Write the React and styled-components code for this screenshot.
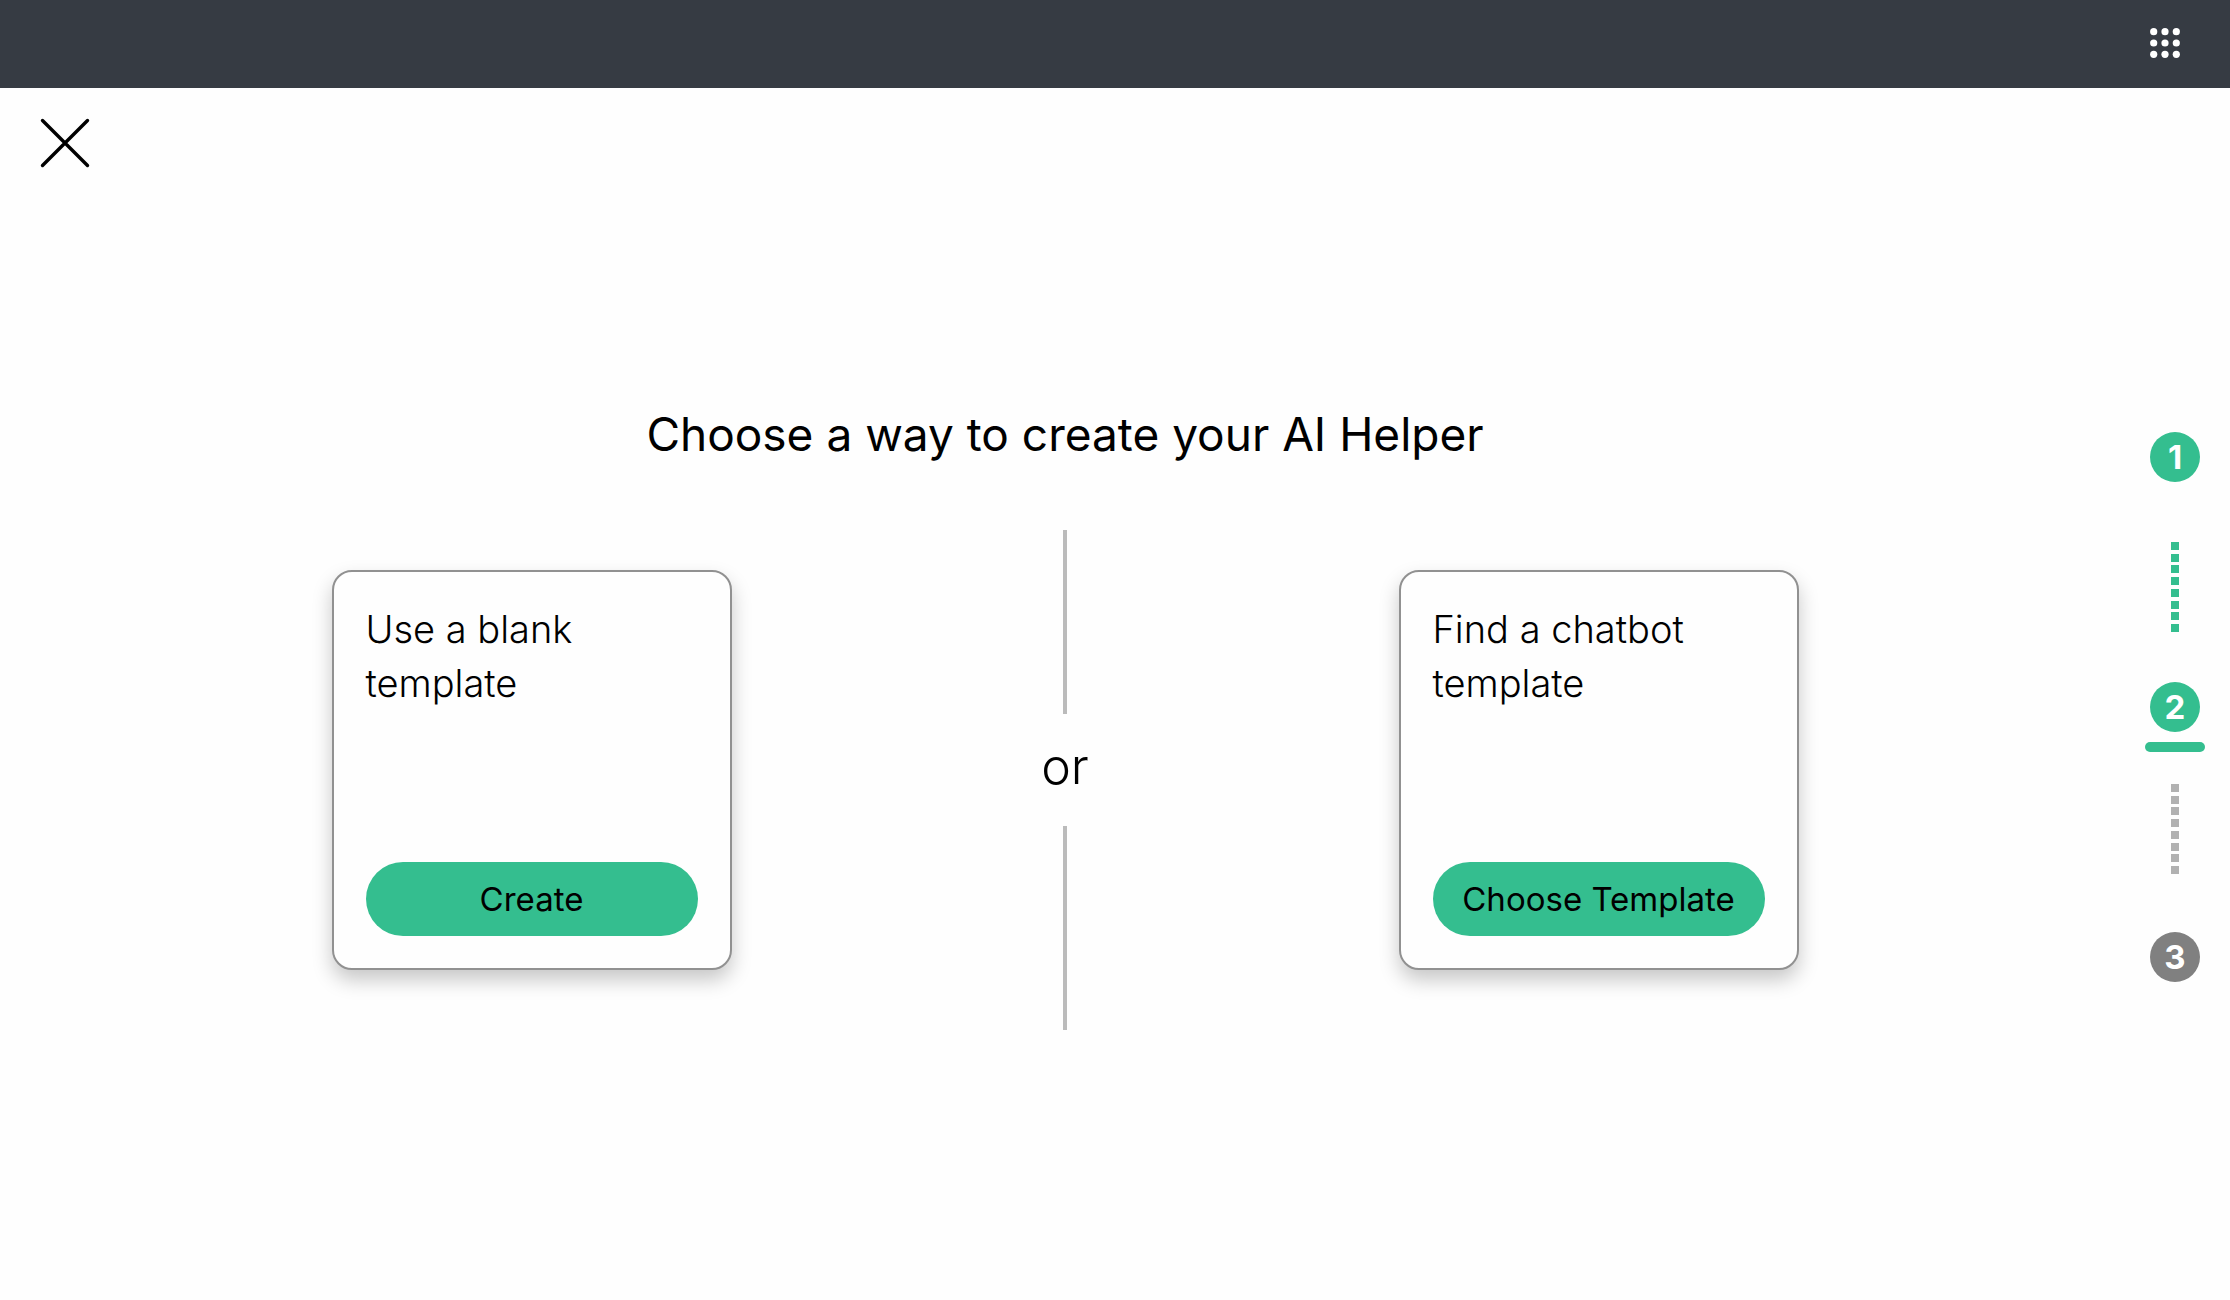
import React from "react";
import styled, { createGlobalStyle } from "styled-components";

const green = "#34be8f";

const GlobalStyle = createGlobalStyle`
  *, *::before, *::after { box-sizing: border-box; }
  body {
    margin: 0;
    background: #fefefe;
    color: #000;
    font-family: Inter, "Open Sans", sans-serif;
  }
  button {
    border: 0;
    padding: 0;
    background: none;
    color: inherit;
    font: inherit;
    cursor: pointer;
  }
`;

const Page = styled.div`
  display: flex;
  flex-direction: column;
  min-height: 100vh;
`;

const TopBar = styled.header`
  display: flex;
  align-items: center;
  justify-content: flex-end;
  height: 88px;
  padding: 0 50px 2px;
  background: #363b43;
  color: #fff;
`;

const Toolbar = styled.div`
  display: flex;
  padding: 30px 40px;
`;

const IconButton = styled.button`
  display: flex;
  width: ${(p) => p.$size}px;
  height: ${(p) => p.$size}px;
`;

const Body = styled.div`
  flex: 1;
  display: flex;
  align-items: center;
  padding-bottom: 68px;
`;

const Content = styled.main`
  flex: 1;
  display: flex;
  flex-direction: column;
  gap: 62px;
`;

const Title = styled.h1`
  margin: 0;
  font-size: 46px;
  font-weight: 400;
  line-height: 68px;
  text-align: center;
`;

const Options = styled.div`
  display: grid;
  grid-template-columns: 1fr 4px 1fr;
  align-items: start;
  justify-items: center;
`;

const Card = styled.section`
  display: flex;
  flex-direction: column;
  justify-content: space-between;
  width: 400px;
  min-height: 400px;
  margin-top: 40px;
  padding: 30px 32px 32px;
  border: 2px solid #919191;
  border-radius: 20px;
  background: #fefefe;
  box-shadow: 0 10px 20px rgba(0, 0, 0, 0.22);
`;

const CardTitle = styled.h2`
  max-width: 280px;
  margin: 0;
  font-size: 38px;
  font-weight: 300;
  line-height: 54px;
`;

const PillButton = styled.button`
  height: 74px;
  border-radius: 37px;
  background: ${green};
  font-size: 33px;
  white-space: nowrap;
`;

const Divider = styled.div`
  display: flex;
  flex-direction: column;
  align-items: center;
  width: 4px;
`;

const Rule = styled.div`
  width: 4px;
  height: ${(p) => p.$length}px;
  background: #bbb;
`;

const DividerText = styled.span`
  padding-bottom: 8px;
  font-size: 50px;
  font-weight: 300;
  line-height: 104px;
`;

const Steps = styled.ol`
  display: flex;
  flex-direction: column;
  align-items: center;
  width: 60px;
  margin: 0 25px 0 15px;
  padding: 0 0 16px;
  list-style: none;
`;

const Step = styled.li`
  display: flex;
  flex-direction: column;
  align-items: center;
  gap: 10px;
`;

const StepButton = styled.button`
  width: 50px;
  height: 50px;
  border-radius: 50%;
  background: ${(p) => (p.$reached ? green : "#808080")};
  color: #fff;
  font-size: 33px;
  font-weight: 700;
  line-height: 50px;
`;

const Underline = styled.div`
  width: 60px;
  height: 10px;
  border-radius: 5px;
  background: ${green};
`;

const Connector = styled.li`
  display: flex;
  flex-direction: column;
  justify-content: space-between;
  height: 90px;
  margin: ${(p) => (p.$afterCurrent ? "32px 0 58px" : "60px 0 50px")};
  color: ${(p) => (p.$reached ? green : "#b1b1b1")};
`;

const Dash = styled.span`
  width: 8px;
  height: 8px;
  background: currentColor;
`;

function AppsIcon() {
  const spots = [3.7, 15, 26.3];
  return (
    <svg width="30" height="30" viewBox="0 0 30 30" fill="currentColor" aria-hidden="true">
      {spots.map((y) => spots.map((x) => <circle key={`${x}-${y}`} cx={x} cy={y} r="3.6" />))}
    </svg>
  );
}

function CloseIcon() {
  return (
    <svg
      width="50"
      height="50"
      viewBox="0 0 50 50"
      fill="none"
      stroke="currentColor"
      strokeWidth="3.4"
      strokeLinecap="round"
      aria-hidden="true"
    >
      <path d="M2.5 2.5L47.5 47.5M47.5 2.5L2.5 47.5" />
    </svg>
  );
}

function OptionCard({ title, action }) {
  return (
    <Card>
      <CardTitle>{title}</CardTitle>
      <PillButton type="button">{action}</PillButton>
    </Card>
  );
}

function StepLink({ reached, afterCurrent }) {
  return (
    <Connector $reached={reached} $afterCurrent={afterCurrent} aria-hidden="true">
      {Array.from({ length: 8 }, (_, i) => (
        <Dash key={i} />
      ))}
    </Connector>
  );
}

export default function App() {
  return (
    <Page>
      <GlobalStyle />
      <TopBar>
        <IconButton type="button" $size={30} aria-label="Apps">
          <AppsIcon />
        </IconButton>
      </TopBar>
      <Toolbar>
        <IconButton type="button" $size={50} aria-label="Close">
          <CloseIcon />
        </IconButton>
      </Toolbar>
      <Body>
        <Content>
          <Title>Choose a way to create your AI Helper</Title>
          <Options>
            <OptionCard title="Use a blank template" action="Create" />
            <Divider>
              <Rule $length={184} />
              <DividerText>or</DividerText>
              <Rule $length={204} />
            </Divider>
            <OptionCard title="Find a chatbot template" action="Choose Template" />
          </Options>
        </Content>
        <Steps>
          <Step>
            <StepButton type="button" $reached>1</StepButton>
          </Step>
          <StepLink reached />
          <Step>
            <StepButton type="button" $reached aria-current="step">2</StepButton>
            <Underline />
          </Step>
          <StepLink afterCurrent />
          <Step>
            <StepButton type="button">3</StepButton>
          </Step>
        </Steps>
      </Body>
    </Page>
  );
}
